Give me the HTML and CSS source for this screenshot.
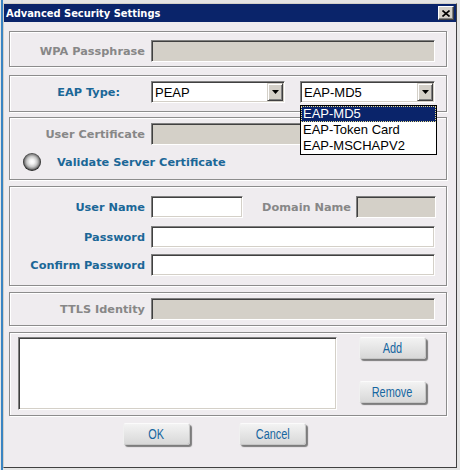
FILE: index.html
```html
<!DOCTYPE html>
<html>
<head>
<meta charset="utf-8">
<title>Advanced Security Settings</title>
<link rel="stylesheet" href="styles.css">
</head>
<body>
<div class="window">
  <div class="titlebar">
    <span class="title">Advanced Security Settings</span>
    <span class="close">
      <svg width="8" height="7" viewBox="0 0 8 7"><path d="M0.5 0.5 L7.5 6.5 M7.5 0.5 L0.5 6.5" stroke="#000" stroke-width="1.6" fill="none"/></svg>
    </span>
  </div>
  <div class="content">
    <div class="group g1">
      <div class="row">
        <span class="lbl gray">WPA Passphrase</span>
        <div class="field off wide"></div>
      </div>
    </div>

    <div class="group g2">
      <div class="row">
        <span class="lbl blue eap">EAP Type:</span>
        <div class="field select s1"><span class="stext">PEAP</span><span class="drop"><svg width="7" height="4" viewBox="0 0 7 4"><path d="M0 0 H7 L3.5 4 Z" fill="#000"/></svg></span></div>
        <div class="field select s2"><span class="stext">EAP-MD5</span><span class="drop"><svg width="7" height="4" viewBox="0 0 7 4"><path d="M0 0 H7 L3.5 4 Z" fill="#000"/></svg></span>
          <ul class="dlist">
            <li class="sel">EAP-MD5</li>
            <li>EAP-Token Card</li>
            <li>EAP-MSCHAPV2</li>
          </ul>
        </div>
      </div>
    </div>

    <div class="group g3">
      <div class="row">
        <span class="lbl gray">User Certificate</span>
        <div class="field off wide"></div>
      </div>
      <div class="radio-row">
        <span class="radio"></span>
        <span class="radio-lbl blue">Validate Server Certificate</span>
      </div>
    </div>

    <div class="group g4">
      <div class="row">
        <span class="lbl blue">User Name</span>
        <div class="field user"></div>
        <span class="dlbl gray">Domain Name</span>
        <div class="field off domain"></div>
      </div>
      <div class="row r2">
        <span class="lbl blue">Password</span>
        <div class="field wide"></div>
      </div>
      <div class="row r3">
        <span class="lbl blue">Confirm Password</span>
        <div class="field wide"></div>
      </div>
    </div>

    <div class="group g5">
      <div class="row">
        <span class="lbl gray">TTLS Identity</span>
        <div class="field off wide"></div>
      </div>
    </div>

    <div class="group g6">
      <div class="field listbox"></div>
      <div class="side">
        <div class="btn"><span>Add</span></div>
        <div class="btn"><span>Remove</span></div>
      </div>
    </div>

    <div class="footer">
      <div class="btn"><span>OK</span></div>
      <div class="btn"><span>Cancel</span></div>
    </div>
  </div>
</div>
</body>
</html>
```

FILE: styles.css
```css
* { box-sizing: border-box; }

body {
  margin: 0;
  width: 460px;
  height: 470px;
  overflow: hidden;
  background: linear-gradient(to right, #e6e6e6 0, #e6e6e6 1px, #3a84c2 1px, #3a84c2 3px, #e4e4e4 3px);
  font-family: "DejaVu Sans", sans-serif;
}

.window {
  margin: 3px 0 0 3px;
  width: 454px;
  height: 465px;
  background: #efecef;
  border: 1px solid;
  border-color: #d4d0c8 #404040 #404040 #d4d0c8;
}

.titlebar {
  height: 18px;
  background: #0a246a;
  display: flex;
  align-items: center;
  justify-content: space-between;
  padding: 0 2px 0 2px;
}

.title {
  color: #fff;
  font: bold 11px "DejaVu Sans Condensed", "DejaVu Sans", sans-serif;
  white-space: nowrap;
}

.close {
  width: 16px;
  height: 14px;
  background: #d4d0c8;
  border: 1px solid;
  border-color: #fff #404040 #404040 #fff;
  box-shadow: inset -1px -1px #808080;
  display: flex;
  align-items: center;
  justify-content: center;
}

.content {
  padding-left: 5px;
}

.group {
  width: 438px;
  border: 1px solid #8c8c8c;
  box-shadow: inset 1px 1px #fff, 1px 1px #fff;
}

.g1 { margin-top: 9px; height: 36px; padding-top: 8px; }
.g2 { margin-top: 8px; height: 37px; padding-top: 5px; }
.g3 { margin-top: 5px; height: 63px; padding-top: 5px; }
.g4 { margin-top: 6px; height: 100px; padding-top: 9px; }
.g5 { margin-top: 6px; height: 34px; padding-top: 5px; }
.g6 { margin-top: 6px; height: 84px; padding: 4px 0 0 8px; display: flex; }

.row {
  display: flex;
  align-items: center;
  height: 22px;
}

.r2 { margin-top: 8px; }
.r3 { margin-top: 6px; }

.lbl {
  width: 135px;
  margin-right: 6px;
  text-align: right;
  font-size: 11.3px;
  font-weight: bold;
  white-space: nowrap;
}

.lbl.eap {
  width: 110px;
  margin-right: 31px;
}

.gray { color: #878787; }
.blue { color: #1b6797; }

.field {
  height: 22px;
  background: #fff;
  border: 1px solid;
  border-color: #808080 #fff #fff #808080;
  box-shadow: inset 1px 1px #404040, inset -1px -1px #d4d0c8;
}

.field.off { background: #d4d0c8; }

.wide { width: 284px; }
.user { width: 92px; }
.domain { width: 80px; }

.dlbl {
  width: 108px;
  margin-right: 5px;
  text-align: right;
  font-size: 11.3px;
  font-weight: bold;
  white-space: nowrap;
}

.select {
  position: relative;
  display: flex;
  align-items: center;
  padding-left: 3px;
  font: 13px "Liberation Sans", sans-serif;
  color: #000;
}

.s1 { width: 134px; margin-right: 15px; }
.s2 { width: 135px; }

.stext { flex: 1; white-space: nowrap; }

.drop {
  width: 16px;
  height: 18px;
  margin-right: 1px;
  background: #d4d0c8;
  border: 1px solid;
  border-color: #d4d0c8 #404040 #404040 #d4d0c8;
  box-shadow: inset 1px 1px #fff, inset -1px -1px #808080;
  display: flex;
  align-items: center;
  justify-content: center;
}

.dlist {
  position: absolute;
  left: -1px;
  top: 23px;
  width: 137px;
  height: 50px;
  margin: 0;
  padding: 0;
  list-style: none;
  background: #fff;
  border: 1px solid #000;
  z-index: 5;
}

.dlist li {
  height: 16px;
  line-height: 16px;
  padding-left: 2px;
  font: 13px/16px "Liberation Sans", sans-serif;
  color: #000;
  white-space: nowrap;
}

.dlist li.sel {
  background: #0a246a;
  color: #fff;
  outline: 1px dotted #e8dc8c;
  outline-offset: -1px;
}

.radio-row {
  display: flex;
  align-items: center;
  margin-top: 8px;
  padding-left: 13px;
  height: 18px;
}

.radio {
  width: 18px;
  height: 18px;
  border-radius: 50%;
  background: radial-gradient(circle at 50% 48%, #ffffff 0%, #f4f4f4 18%, #c8c8c8 40%, #8a8a8a 55%, #2a2a2a 68%, #4a4a4a 80%, #b0b0b0 95%, rgba(239,236,239,0) 100%);
}

.radio-lbl {
  margin-left: 16px;
  font-size: 11.3px;
  font-weight: bold;
  white-space: nowrap;
}

.listbox {
  width: 319px;
  height: 73px;
}

.side {
  margin-left: 22px;
  display: flex;
  flex-direction: column;
  gap: 22px;
}

.btn {
  width: 67px;
  height: 22px;
  border-radius: 3px;
  background: linear-gradient(#f3f3f3, #d8d8d8);
  border: 1px solid #c6c6c6;
  border-top-color: #fbfbfb;
  border-left-color: #f0f0f0;
  box-shadow: 2px 2px 1px #7c7c7c;
  display: flex;
  align-items: center;
  justify-content: center;
  color: #1666a0;
}

.btn span {
  display: inline-block;
  font: 14px "Liberation Sans", sans-serif;
  transform: scaleX(0.78);
  white-space: nowrap;
}

.footer {
  margin-top: 7px;
  display: flex;
  padding-left: 114px;
  gap: 49px;
}
```
